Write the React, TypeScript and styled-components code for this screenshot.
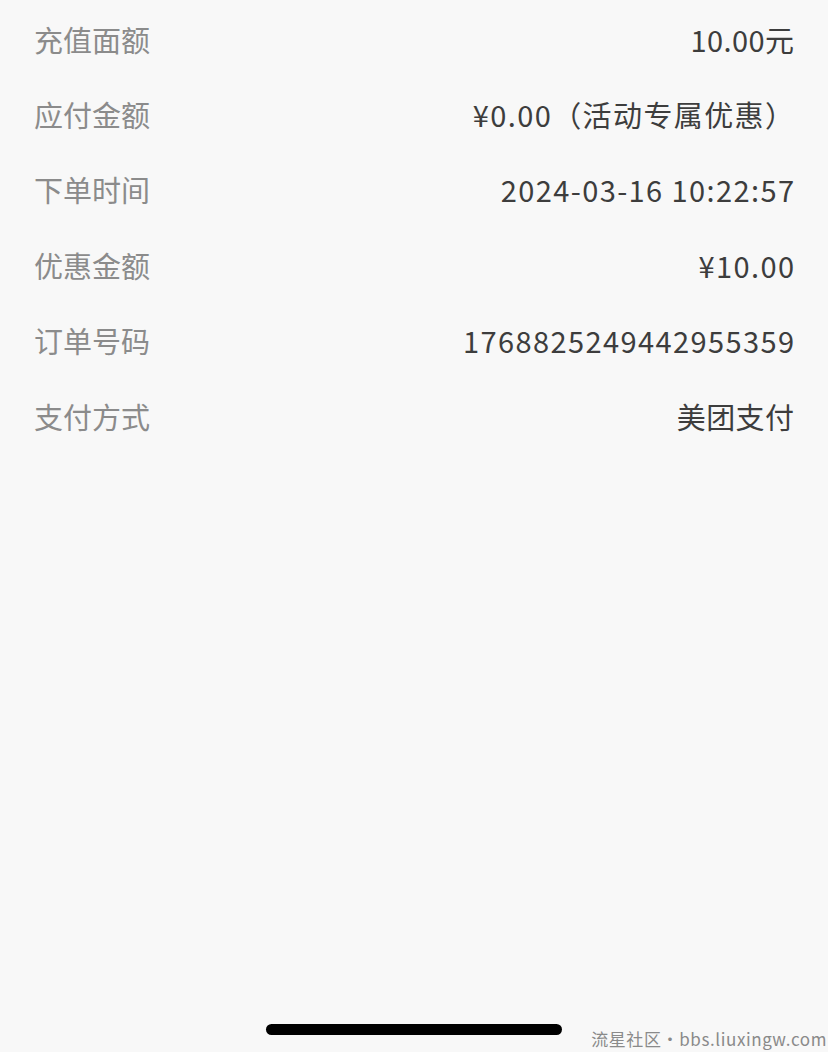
import styled, { createGlobalStyle } from "styled-components";

const GlobalStyle = createGlobalStyle`
  html, body {
    margin: 0;
    padding: 0;
    background: #f8f8f8;
  }
  body {
    font-family: "Noto Sans CJK SC", "Noto Sans", sans-serif;
  }
`;

const rows = [
  { label: "充值面额", value: "10.00元", wide: false },
  { label: "应付金额", value: "¥0.00（活动专属优惠）", wide: true },
  { label: "下单时间", value: "2024-03-16 10:22:57", wide: true },
  { label: "优惠金额", value: "¥10.00", wide: true },
  { label: "订单号码", value: "1768825249442955359", wide: true },
  { label: "支付方式", value: "美团支付", wide: false },
];

const Page = styled.div`
  position: relative;
  width: 828px;
  height: 1052px;
  background: #f8f8f8;
  overflow: hidden;
  display: flex;
  flex-direction: column;
`;

const List = styled.div`
  display: flex;
  flex-direction: column;
  padding: 1px 34px 0 34px;
`;

const Row = styled.div`
  display: flex;
  justify-content: space-between;
  align-items: center;
  height: 75.4px;
`;

const Label = styled.span`
  font-size: 29px;
  color: #8b8b8b;
`;

const Value = styled.span<{ $wide: boolean }>`
  font-size: 29px;
  color: #3d3d3d;
  letter-spacing: ${(p) => (p.$wide ? "1.4px" : "0.4px")};
  margin-right: ${(p) => (p.$wide ? "-1.4px" : "-0.4px")};
`;

const Spacer = styled.div`
  flex: 1;
`;

const Bottom = styled.div`
  display: flex;
  justify-content: center;
  padding-bottom: 17px;
`;

const HomeBar = styled.div`
  width: 296px;
  height: 11px;
  border-radius: 6px;
  background: #000;
`;

const Watermark = styled.div`
  position: absolute;
  right: 1px;
  bottom: 1px;
  font-family: "Noto Sans CJK SC", sans-serif;
  font-size: 17px;
  letter-spacing: 0.6px;
  color: #8a8a8a;
`;

export default function App() {
  return (
    <Page>
      <GlobalStyle />
      <List>
        {rows.map((r) => (
          <Row key={r.label}>
            <Label>{r.label}</Label>
            <Value $wide={r.wide}>{r.value}</Value>
          </Row>
        ))}
      </List>
      <Spacer />
      <Bottom>
        <HomeBar />
      </Bottom>
      <Watermark>流星社区·bbs.liuxingw.com</Watermark>
    </Page>
  );
}
